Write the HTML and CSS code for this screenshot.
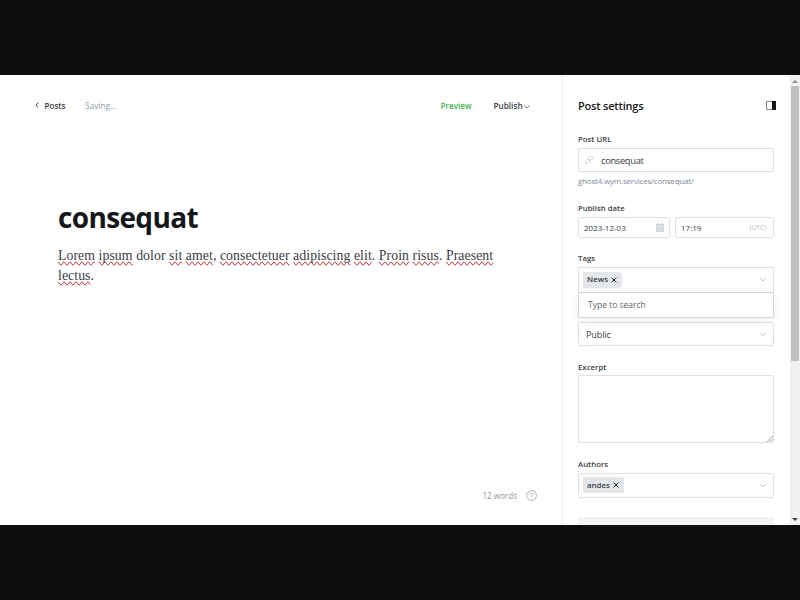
FILE: index.html
```html
<!DOCTYPE html>
<html lang="en">
<head>
<meta charset="utf-8">
<title>Post editor</title>
<link rel="stylesheet" href="styles.css">
</head>
<body>
<div class="app">
  <main class="editor">
    <header class="toolbar">
      <svg class="back" width="4" height="6" viewBox="0 0 4 6"><path d="M3.4.5.8 3l2.6 2.5" fill="none" stroke="#394047"/></svg>
      <a class="posts">Posts</a>
      <span class="status">Saving...</span>
      <a class="preview">Preview</a>
      <a class="publish">Publish</a>
      <svg class="caret" width="6" height="4" viewBox="0 0 6 4"><path d="M.5.6 3 3.1 5.5.6" fill="none" stroke="#656d75"/></svg>
    </header>
    <article class="post">
      <h1>consequat</h1>
      <p><span class="line"><u>Lorem</u> <u>ipsum</u> dolor <u>sit</u> <u>amet</u>, <u>consectetuer</u> <u>adipiscing</u> <u>elit</u>. <u>Proin</u> <u>risus</u>. <u>Praesent</u></span> <u>lectus</u>.</p>
    </article>
    <footer class="count">
      <span>12 words</span>
      <svg width="11" height="11" viewBox="0 0 11 11" fill="none" stroke="#94a1ad" stroke-width=".8"><circle cx="5.5" cy="5.5" r="4.9"/><path d="M4 4.5c0-2.1 3.1-2 3.1-.1 0 1.2-1.5 1.1-1.5 2.3M5.6 7.5v.9"/></svg>
    </footer>
  </main>
  <aside class="settings">
    <div class="heading">
      <h2>Post settings</h2>
      <svg width="10" height="9" viewBox="0 0 10 9"><path d="M.5.5h9v8h-9z" fill="#fff" stroke="#888"/><path d="M6 0h4v9H6z" fill="#15171a"/></svg>
    </div>
    <label class="l-url">Post URL</label>
    <div class="field url">
      <svg width="10" height="10" viewBox="0 0 10 10" fill="none" stroke="#c3c9ce" stroke-width=".8"><rect x="-2.6" y="-1.4" width="5.2" height="2.8" rx="1.4" transform="translate(3.4 6.5) rotate(-45)"/><rect x="-2.6" y="-1.4" width="5.2" height="2.8" rx="1.4" transform="translate(6.4 3.5) rotate(-45)"/></svg>
      <span class="slug">consequat</span>
    </div>
    <p class="hint">ghost4.wym.services/consequat/</p>
    <label class="l-date">Publish date</label>
    <div class="dates">
      <div class="field date"><span>2023-12-03</span>
        <svg width="8" height="9" viewBox="0 0 8 9"><path d="M0 1h8v8H0z" fill="#d0d4d8"/><path d="M2 0v2M6 0v2" stroke="#bcc2c7"/><path d="M0 3h8M1 5h6M1 7h6" stroke="#fff" stroke-width=".5"/></svg>
      </div>
      <div class="field time"><span>17:19</span><small>(UTC)</small></div>
    </div>
    <label class="l-tags">Tags</label>
    <div class="field select tags">
      <span class="token news">News<svg width="6" height="6" viewBox="0 0 6 6"><path d="m.6.6 4.8 4.8m0-4.8L.6 5.4" stroke="#23282d" fill="none"/></svg></span>
      <svg class="chev" width="8" height="5" viewBox="0 0 8 5"><path d="M.7.7 4 4 7.3.7" fill="none" stroke="#b8bfc6" stroke-width=".9"/></svg>
      <div class="menu"><span>Type to search</span></div>
    </div>
    <div class="field select access">
      <span>Public</span>
      <svg class="chev" width="8" height="5" viewBox="0 0 8 5"><path d="M1 .7 4 3.8 7 .7" fill="none" stroke="#b8bfc6" stroke-width=".9"/></svg>
    </div>
    <label class="l-excerpt">Excerpt</label>
    <div class="field excerpt"><svg width="6" height="6" viewBox="0 0 6 6"><path d="M0 6 6 0M3 6l3-3" stroke="#777" stroke-width=".7"/></svg></div>
    <label class="l-authors">Authors</label>
    <div class="field select authors">
      <span class="token andes">andes<svg width="6" height="6" viewBox="0 0 6 6"><path d="m.6.6 4.8 4.8m0-4.8L.6 5.4" stroke="#23282d" fill="none"/></svg></span>
      <svg class="chev" width="8" height="5" viewBox="0 0 8 5"><path d="M.7.7 4 4 7.3.7" fill="none" stroke="#b8bfc6" stroke-width=".9"/></svg>
    </div>
    <div class="block"></div>
  </aside>
  <div class="scrollbar">
    <svg width="6" height="3" viewBox="0 0 6 3"><path d="M0 3 3 0l3 3z" fill="#8c8c8c"/></svg>
    <div class="thumb"></div>
    <svg class="down" width="6" height="3" viewBox="0 0 6 3"><path d="m0 0 3 3 3-3z" fill="#444"/></svg>
  </div>
</div>
</body>
</html>
```
FILE: styles.css
```css
* { box-sizing: border-box; }
body {
  margin: 0;
  height: 600px;
  padding: 75px 0;
  background: #0e0e0e;
  overflow: hidden;
  font-family: "Open Sans", "Noto Sans", sans-serif;
  font-size: 8px;
  color: #394047;
}
svg { display: block; flex: none; }
.app { display: flex; height: 450px; background: #fff; }
.editor { width: 562px; display: flex; flex-direction: column; }
.toolbar {
  display: flex;
  align-items: center;
  height: 20px;
  margin: 20px 32px 0 35px;
  white-space: nowrap;
}
.posts { width: 40.5px; margin-left: 5.5px; font-weight: 600; font-size: 8.1px; }
.status { color: #95a1ad; font-size: 8.3px; }
.preview { margin-left: auto; width: 53px; color: #35bd45; font-weight: 600; font-size: 8.1px; }
.publish { width: 30.5px; font-weight: 600; font-size: 8.2px; }
.caret { margin-top: 3px; }
.post { margin: 84px 58px 0; flex: 1; }
h1 {
  margin: 0;
  color: #15171a;
  font-size: 28px;
  line-height: 36px;
  font-weight: 700;
  letter-spacing: -0.65px;
}
.post p {
  margin: 11px 0 0;
  font-family: "Liberation Serif", serif;
  font-size: 13.8px;
  letter-spacing: 0.06px;
  line-height: 20px;
}
.line { display: block; white-space: nowrap; }
u { text-decoration: spelling-error; }
.count {
  display: flex;
  align-items: center;
  justify-content: flex-end;
  gap: 9px;
  height: 20px;
  margin: 0 25px 20px 0;
  color: #8896a3;
  font-size: 8.1px;
}
.settings {
  width: 228px;
  padding: 0 16px 0 15px;
  border-left: 1px solid #eceeef;
  overflow: hidden;
}
.settings label { display: block; height: 12px; line-height: 12px; font-size: 7.8px; font-weight: 600; white-space: nowrap; }
.heading { display: flex; align-items: center; height: 20px; margin-top: 20px; }
h2 { margin: 0 auto 0 0; color: #15171a; font-size: 11px; font-weight: 600; letter-spacing: -0.2px; }
.heading svg { margin-right: -2px; }
.field { display: flex; align-items: center; width: 196px; border: 1px solid #dddfe1; border-radius: 2px; background: #fff; white-space: nowrap; }
.l-url { margin-top: 18px; }
.url { height: 24px; margin-top: 3px; padding-left: 5px; gap: 7px; }
.slug { font-size: 9.4px; letter-spacing: -0.35px; }
.hint { margin: 3px 0 0; height: 12px; line-height: 12px; color: #7c8b9a; font-size: 8px; letter-spacing: -0.2px; white-space: nowrap; }
.l-date { margin-top: 15px; }
.dates { display: flex; gap: 5px; margin-top: 3px; }
.date, .time { height: 21px; padding: 0 5px; justify-content: space-between; }
.date { width: 92px; }
.time { width: 99px; padding-right: 7px; }
small { color: #b2bac1; font-size: 6.5px; }
.l-tags { margin-top: 14px; }
.select { position: relative; padding: 0 6px 0 4px; justify-content: space-between; }
.tags { height: 26px; margin-top: 3px; padding-bottom: 1px; }
.token { display: flex; align-items: center; gap: 3px; height: 16px; padding: 0 4px 1px; border-radius: 2px; background: #e3e7ea; font-weight: 600; font-size: 7.9px; }
.token svg { margin-top: 1px; }
.news { width: 39px; }
.andes { width: 41px; }
.menu {
  position: absolute;
  z-index: 1;
  top: 24px;
  left: -1px;
  width: 196px;
  height: 26px;
  padding: 0 0 1px 9px;
  display: flex;
  align-items: center;
  border: 1px solid #d3d7da;
  border-radius: 0 0 2px 2px;
  background: #fff;
  box-shadow: 0 3px 8px rgba(0, 0, 0, .07);
  color: #5d656d;
  font-size: 8.5px;
}
.access { height: 24px; margin-top: 29px; padding: 0 6px 0 7px; font-size: 9px; letter-spacing: -0.1px; }
.l-excerpt { margin-top: 15px; }
.excerpt { height: 68px; margin-top: 2px; align-items: flex-end; justify-content: flex-end; }
.l-authors { margin-top: 15px; }
.authors { height: 25px; margin-top: 3px; padding-bottom: 1px; }
.block { height: 8px; margin-top: 19px; background: #f2f3f4; border-radius: 2px 2px 0 0; }
.scrollbar { display: flex; flex-direction: column; align-items: center; width: 10px; padding: 5px 1px 4px; background: #f1f1f1; }
.thumb { width: 8px; height: 275px; margin-top: 3px; background: #c1c1c1; }
.down { margin-top: auto; }
```
